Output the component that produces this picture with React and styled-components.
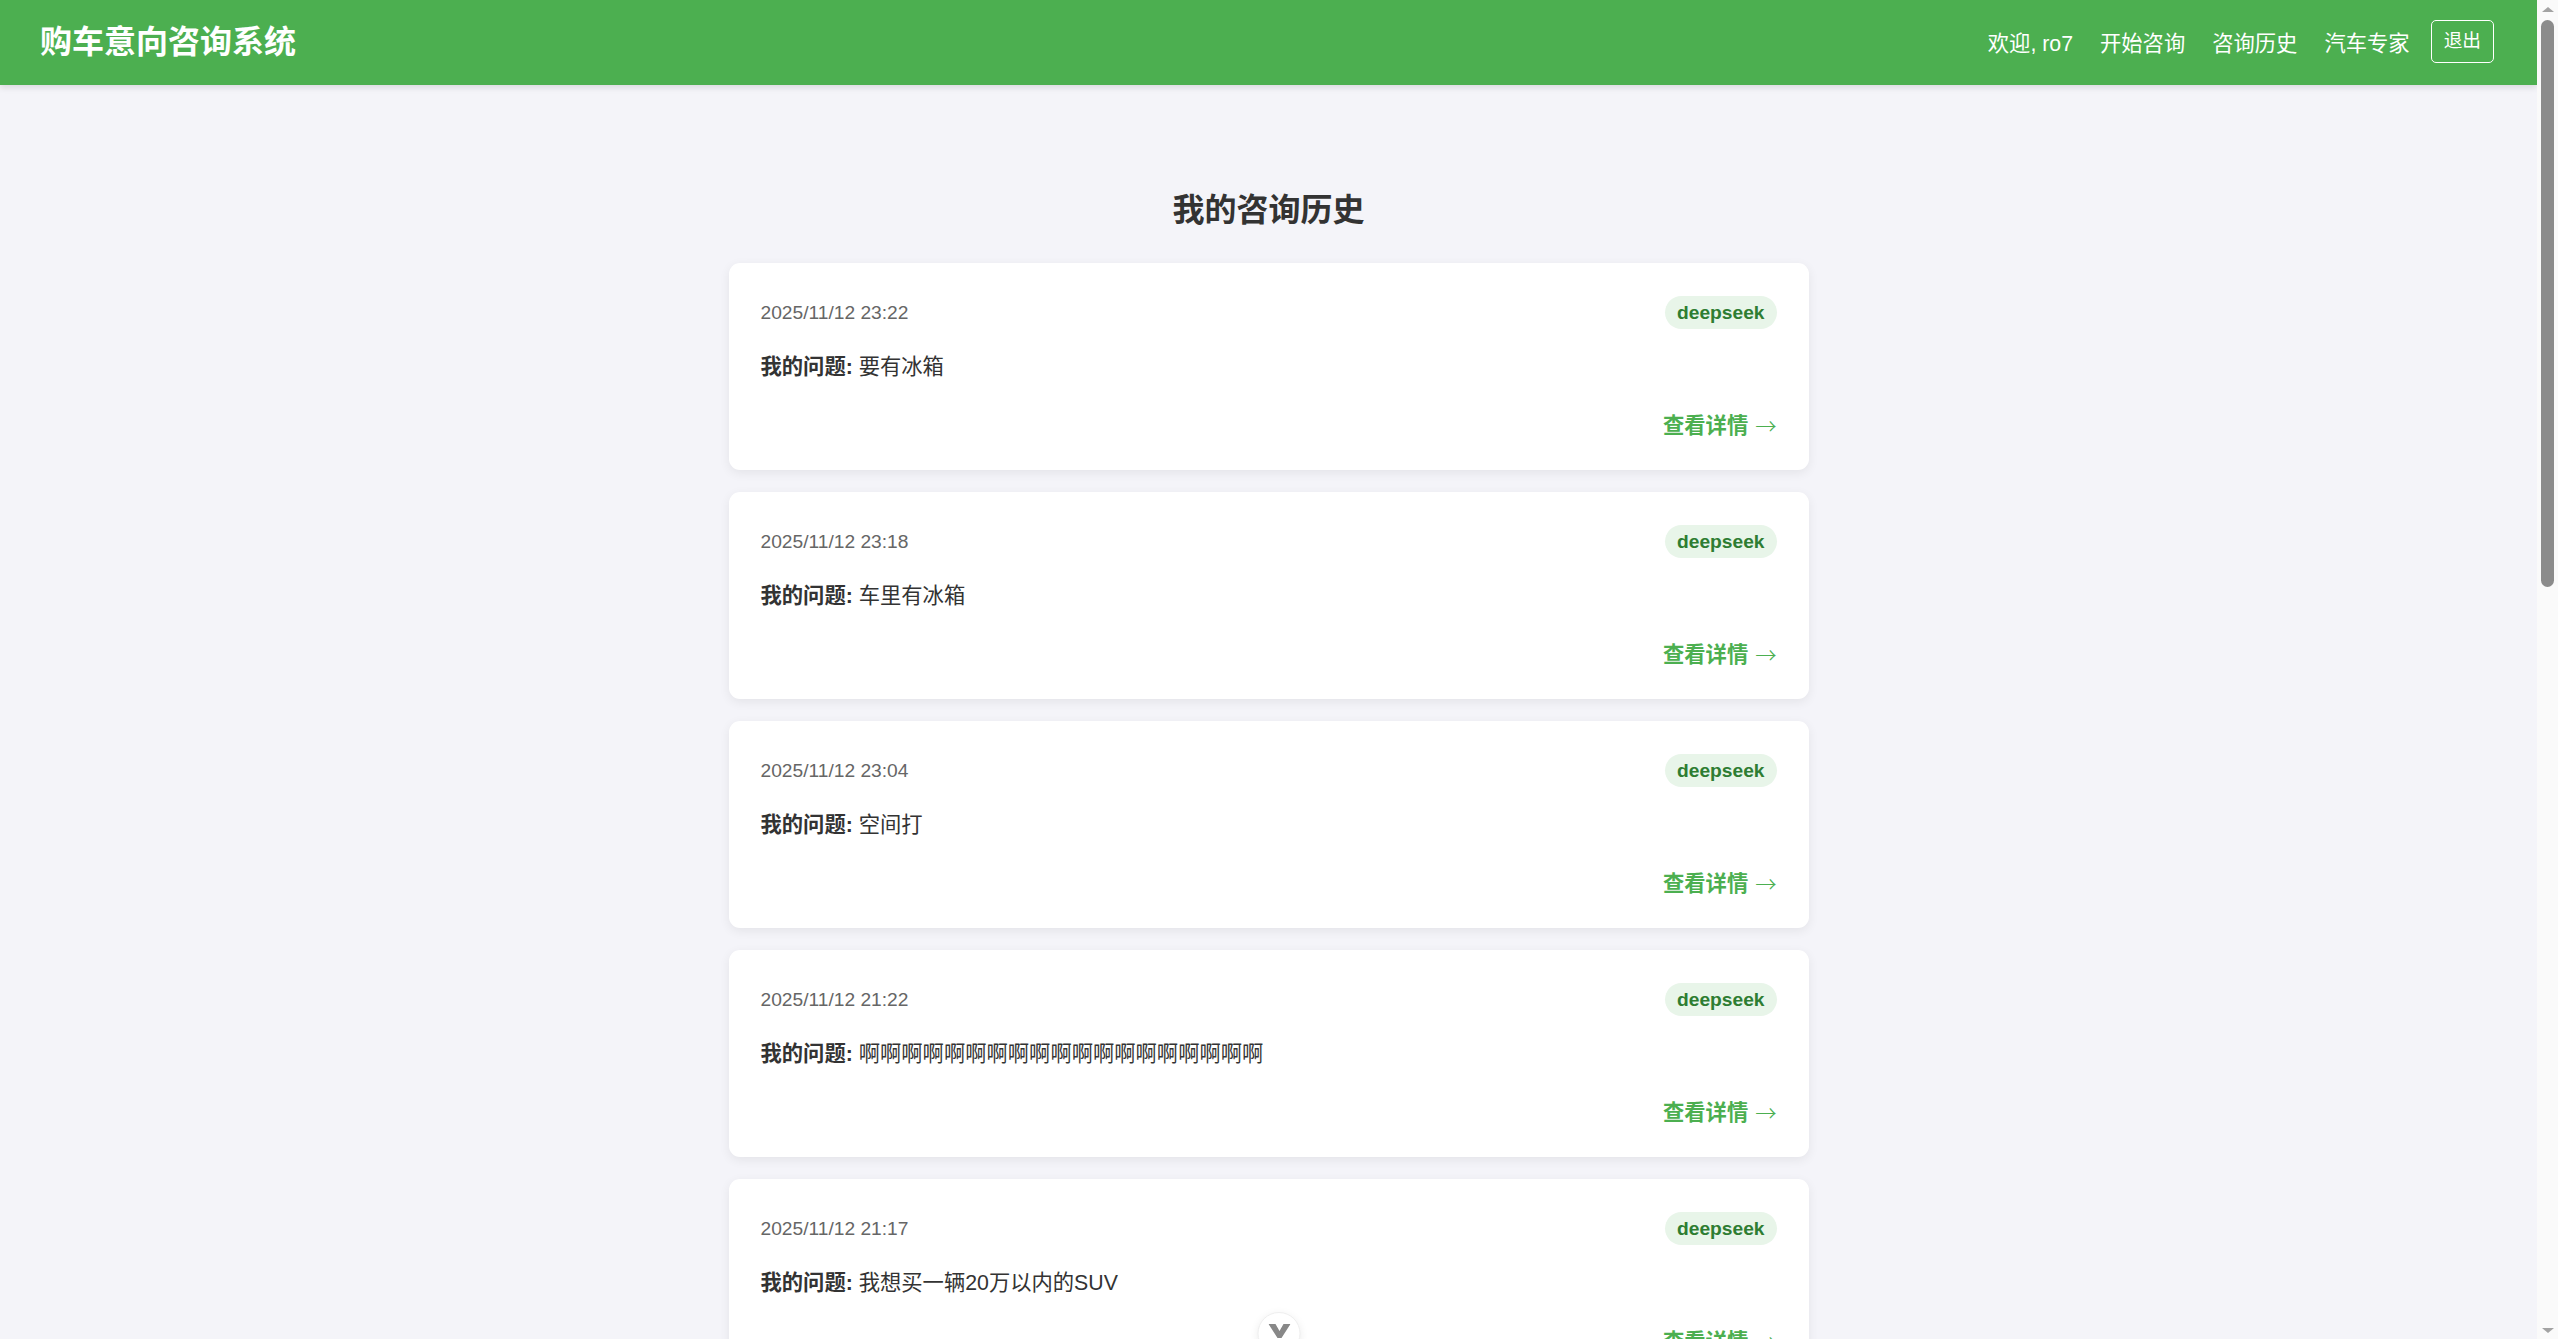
import React from "react";
import styled, { createGlobalStyle } from "styled-components";

const GlobalStyle = createGlobalStyle`
  html, body {
    margin: 0;
    padding: 0;
    height: 100%;
    overflow: hidden;
    background: #f4f4f9;
    font-family: "Liberation Sans", "Noto Sans CJK SC", sans-serif;
    color: #333;
  }
`;

const Page = styled.div`
  height: 100vh;
  overflow-y: auto;
  padding-right: 21px;
  box-sizing: border-box;
  background: #f4f4f9;
  scrollbar-width: none;
`;

const Header = styled.header`
  display: flex;
  align-items: center;
  justify-content: space-between;
  height: 85px;
  padding: 0 43px 0 40px;
  box-sizing: border-box;
  background: #4caf50;
  color: white;
  box-shadow: 0 3px 6px rgba(0, 0, 0, 0.1);
`;

const Logo = styled.h1`
  margin: 0;
  font-size: 32px;
  font-weight: bold;
  line-height: 1.2;
`;

const Nav = styled.nav`
  display: flex;
  align-items: center;
  margin-top: -2px;
`;

const NavLink = styled.a`
  color: white;
  text-decoration: none;
  font-size: 21.3px;
  margin-left: ${props => (props.first ? "0" : "27px")};
`;

const LogoutButton = styled.button`
  margin-left: 21px;
  padding: 8px 12px;
  background: transparent;
  color: white;
  border: 1px solid white;
  border-radius: 5px;
  font-family: inherit;
  font-size: 18.7px;
  line-height: 1.3;
  cursor: pointer;
`;

const Main = styled.main`
  max-width: 1080px;
  margin: 0 auto;
  padding: 106px 0 100px;
`;

const Title = styled.h2`
  margin: 0 0 34px;
  text-align: center;
  font-size: 32px;
  line-height: 1.2;
  color: #333;
`;

const Card = styled.div`
  background: white;
  border-radius: 11px;
  padding: 33px 32px 31px;
  margin-bottom: 22px;
  box-shadow: 0 3px 11px rgba(0, 0, 0, 0.07);
`;

const CardHead = styled.div`
  display: flex;
  justify-content: space-between;
  align-items: center;
  height: 33px;
`;

const Time = styled.span`
  font-size: 19.2px;
  color: #666;
`;

const Tag = styled.span`
  background: #e8f5e9;
  color: #2e7d32;
  font-size: 19.2px;
  font-weight: bold;
  line-height: 22px;
  padding: 5.5px 12px;
  border-radius: 17px;
`;

const Question = styled.p`
  margin: 22px 0 0;
  font-size: 21.3px;
  line-height: 32px;
  color: #333;

  strong {
    font-weight: bold;
  }
`;

const Footer = styled.div`
  display: flex;
  justify-content: flex-end;
  margin-top: 24px;
`;

const Detail = styled.a`
  display: flex;
  align-items: center;
  gap: 7px;
  height: 32px;
  color: #4caf50;
  font-size: 21.3px;
  font-weight: bold;
  text-decoration: none;
`;

const Arrow = styled.span`
  font-family: "Noto Sans CJK SC", sans-serif;
  font-weight: 300;
  font-feature-settings: "fwid";
  line-height: 1;
  margin-top: 3px;
`;

const ScrollDown = styled.button`
  position: fixed;
  left: 50%;
  bottom: -16px;
  transform: translateX(-50%);
  width: 43px;
  height: 43px;
  border-radius: 50%;
  border: 1px solid #eee;
  background: white;
  box-shadow: 0 2px 8px rgba(0, 0, 0, 0.08);
  display: flex;
  align-items: flex-start;
  justify-content: center;
  padding: 11px 0 0;
`;

/* the window's scrollbar, drawn because the capture hides real ones */
const Rail = styled.div`
  position: fixed;
  top: 0;
  right: 0;
  bottom: 0;
  width: 21px;
  background: #fafafa;
  display: flex;
  flex-direction: column;
  align-items: center;
`;

const RailArrow = styled.div`
  width: 0;
  height: 0;
  margin: 7px 0 6px;
  border-left: 6px solid transparent;
  border-right: 6px solid transparent;
  ${props =>
    props.down
      ? "border-top: 5px solid #a3a3a3; margin-top: auto;"
      : "border-bottom: 5px solid #a3a3a3;"}
`;

const Thumb = styled.div`
  width: 13px;
  height: 567px;
  margin-top: 2px;
  border-radius: 7px;
  background: #8b8b8b;
`;

const history = [
  { time: "2025/11/12 23:22", q: "要有冰箱" },
  { time: "2025/11/12 23:18", q: "车里有冰箱" },
  { time: "2025/11/12 23:04", q: "空间打" },
  { time: "2025/11/12 21:22", q: "啊".repeat(19) },
  { time: "2025/11/12 21:17", q: "我想买一辆20万以内的SUV" },
  { time: "2025/11/12 20:45", q: "家用车推荐" },
  { time: "2025/11/12 20:31", q: "油耗低一点的车" },
  { time: "2025/11/12 19:58", q: "新能源车续航怎么样" },
  { time: "2025/11/11 22:10", q: "适合新手的车" },
  { time: "2025/11/11 21:42", q: "七座SUV有哪些" },
  { time: "2025/11/11 20:05", q: "预算15万" },
  { time: "2025/11/11 19:30", q: "你好" }
];

export default function App() {
  return (
    <Page>
      <GlobalStyle />
      <Header>
        <Logo>购车意向咨询系统</Logo>
        <Nav>
          <NavLink first>欢迎, ro7</NavLink>
          <NavLink>开始咨询</NavLink>
          <NavLink>咨询历史</NavLink>
          <NavLink>汽车专家</NavLink>
          <LogoutButton>退出</LogoutButton>
        </Nav>
      </Header>
      <Main>
        <Title>我的咨询历史</Title>
        {history.map(item => (
          <Card key={item.time}>
            <CardHead>
              <Time>{item.time}</Time>
              <Tag>deepseek</Tag>
            </CardHead>
            <Question>
              <strong>我的问题:</strong> {item.q}
            </Question>
            <Footer>
              <Detail>
                查看详情<Arrow>→</Arrow>
              </Detail>
            </Footer>
          </Card>
        ))}
      </Main>
      <ScrollDown>
        <svg width="22" height="14" viewBox="0 0 22 14">
          <polygon points="0,0 7,0 11,7 15,0 22,0 13,14 9,14" fill="#888" />
        </svg>
      </ScrollDown>
      <Rail>
        <RailArrow />
        <Thumb />
        <RailArrow down />
      </Rail>
    </Page>
  );
}
